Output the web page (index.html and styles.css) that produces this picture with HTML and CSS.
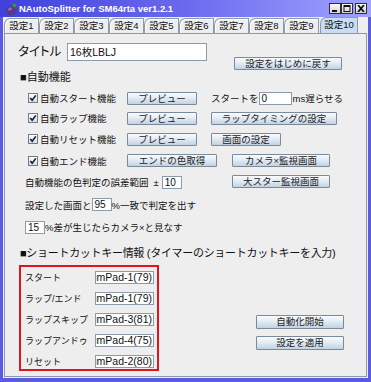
FILE: index.html
```html
<!DOCTYPE html>
<html lang="ja">

<head>
    <meta charset="UTF-8">
    <title>NAutoSplitter for SM64rta ver1.2.1</title>
    <link rel="stylesheet" href="styles.css">
</head>

<body>
    <div class="window">
        <div class="titlebar">
            <svg class="app-icon" width="14" height="14" viewBox="0 0 14 14">
                <ellipse cx="7.5" cy="8.5" rx="5.6" ry="4.6" transform="rotate(-20 7.5 8.5)" fill="#5b3a8c" />
                <ellipse cx="6" cy="7" rx="2.2" ry="1.4" transform="rotate(-20 6 7)" fill="#8a6bbd" />
                <path d="M8 2.5 L11 1.5 L12.5 4.5 L10 5.5 Z" fill="#3f9a2e" />
            </svg>
            <span class="title">NAutoSplitter for SM64rta ver1.2.1</span>
            <div class="win-buttons">
                <span class="win-btn"><svg width="8" height="7" viewBox="0 0 8 7"><rect x="1" y="5" width="5" height="2" fill="#111" /></svg></span>
                <span class="win-btn"><svg width="8" height="7" viewBox="0 0 8 7"><rect x="1" y="0.5" width="6" height="6" fill="none" stroke="#111" stroke-width="1" /><rect x="1" y="0" width="6" height="2" fill="#111" /></svg></span>
                <span class="win-btn close"><svg width="8" height="7" viewBox="0 0 8 7"><path d="M1 0 L7 7 M7 0 L1 7" stroke="#111" stroke-width="1.8" /></svg></span>
            </div>
        </div>

        <div class="frame">
            <div class="tabs">
                <div class="tab">設定1</div>
                <div class="tab">設定2</div>
                <div class="tab">設定3</div>
                <div class="tab">設定4</div>
                <div class="tab">設定5</div>
                <div class="tab">設定6</div>
                <div class="tab">設定7</div>
                <div class="tab">設定8</div>
                <div class="tab">設定9</div>
                <div class="tab active">設定10</div>
            </div>

            <div class="panel">
                <div class="title-row">
                    <span class="title-label">タイトル</span>
                    <span class="field title-field">16枚LBLJ</span>
                    <span class="btn btn-reset">設定をはじめに戻す</span>
                </div>

                <div class="section">■自動機能</div>

                <div class="row">
                    <span class="check-cell"><span class="checkbox"><svg width="8" height="8" viewBox="0 0 8 8"><path d="M1.3 4 L3.2 6.3 L6.8 1.4" fill="none" stroke="#1b1b1b" stroke-width="1.6" /></svg></span>自動スタート機能</span>
                    <span class="btn btn-preview">プレビュー</span>
                    <span class="col-right">スタートを</span>
                    <span class="field ms-field">0</span>
                    <span class="unit">ms遅らせる</span>
                </div>
                <div class="row">
                    <span class="check-cell"><span class="checkbox"><svg width="8" height="8" viewBox="0 0 8 8"><path d="M1.3 4 L3.2 6.3 L6.8 1.4" fill="none" stroke="#1b1b1b" stroke-width="1.6" /></svg></span>自動ラップ機能</span>
                    <span class="btn btn-preview">プレビュー</span>
                    <span class="btn col-right btn-lap">ラップタイミングの設定</span>
                </div>
                <div class="row row-22">
                    <span class="check-cell"><span class="checkbox"><svg width="8" height="8" viewBox="0 0 8 8"><path d="M1.3 4 L3.2 6.3 L6.8 1.4" fill="none" stroke="#1b1b1b" stroke-width="1.6" /></svg></span>自動リセット機能</span>
                    <span class="btn btn-preview">プレビュー</span>
                    <span class="btn col-right btn-screen">画面の設定</span>
                </div>
                <div class="row row-21">
                    <span class="check-cell"><span class="checkbox"><svg width="8" height="8" viewBox="0 0 8 8"><path d="M1.3 4 L3.2 6.3 L6.8 1.4" fill="none" stroke="#1b1b1b" stroke-width="1.6" /></svg></span>自動エンド機能</span>
                    <span class="btn btn-end">エンドの色取得</span>
                    <span class="btn btn-monitor">カメラ×監視画面</span>
                </div>
                <div class="row row-22 row-text">
                    <span class="tolerance">自動機能の色判定の誤差範囲<span class="plusminus">±</span><span class="field num-field">10</span></span>
                    <span class="btn btn-monitor-star">大スター監視画面</span>
                </div>
                <div class="row row-23 row-text">
                    設定した画面と<span class="field num-field">95</span>%一致で判定を出す
                </div>
                <div class="row row-22 row-text">
                    <span class="field num-field">15</span>%差が生じたらカメラ×と見なす
                </div>

                <div class="section section-keys">■ショートカットキー情報 (タイマーのショートカットキーを入力)</div>

                <div class="shortcut">
                    <div class="keybox">
                        <span>スタート</span>
                        <span class="field key-field"><span>NumPad-1(79)</span></span>
                        <span>ラップ/エンド</span>
                        <span class="field key-field"><span>NumPad-1(79)</span></span>
                        <span>ラップスキップ</span>
                        <span class="field key-field"><span>NumPad-3(81)</span></span>
                        <span>ラップアンドゥ</span>
                        <span class="field key-field"><span>NumPad-4(75)</span></span>
                        <span>リセット</span>
                        <span class="field key-field"><span>NumPad-2(80)</span></span>
                    </div>
                    <div class="actions">
                        <span class="btn btn-action">自動化開始</span>
                        <span class="btn btn-action">設定を適用</span>
                    </div>
                </div>
            </div>
        </div>
    </div>
</body>

</html>
```

FILE: styles.css
```css
html,
body {
    margin: 0;
    padding: 0;
}

body {
    background: #eeeeee;
    font-family: "Liberation Sans", "Noto Sans CJK JP", sans-serif;
    color: #111111;
}

.window {
    width: 371px;
    height: 382px;
    display: flex;
    flex-direction: column;
}

/* title bar */

.titlebar {
    height: 17px;
    display: flex;
    align-items: center;
    padding: 0 4px;
    background: linear-gradient(to right, #4040dc, #6a6aee 50%, #a2a2ff);
}

.app-icon {
    margin-right: 1px;
    flex-shrink: 0;
}

.title {
    color: #ffffff;
    font-weight: bold;
    font-size: 9.5px;
    white-space: nowrap;
}

.win-buttons {
    margin-left: auto;
    display: flex;
}

.win-btn {
    width: 12px;
    height: 11px;
    box-sizing: border-box;
    border: 1px solid #303030;
    background: linear-gradient(#fbfbfb, #d2d2d2);
    display: flex;
    align-items: center;
    justify-content: center;
}

.win-btn.close {
    margin-left: 2px;
}

/* frame and tabs */

.frame {
    flex: 1;
    display: flex;
    flex-direction: column;
    border-left: 3px solid #5a5ae2;
    border-right: 3px solid #5a5ae2;
    border-bottom: 4px solid #5a5ae2;
}

.tabs {
    height: 16px;
    display: flex;
    align-items: flex-end;
    padding-left: 1px;
}

.tab {
    width: 35px;
    height: 15px;
    box-sizing: border-box;
    border: 1px solid #8a9bb0;
    border-bottom: 0;
    border-top-left-radius: 6px 7px;
    background: #eeeeee;
    font-size: 9.5px;
    line-height: 14px;
    text-align: center;
    box-shadow: inset 1px 1px 0 #ffffff;
}

.tab.active {
    width: 38px;
    height: 16px;
    margin-left: 1px;
    background: #c8ddf2;
    box-shadow: none;
}

.panel {
    flex: 1;
    margin: 0 1px 1px;
    border: 1px solid #8a9bb0;
}

/* generic controls */

.field {
    box-sizing: border-box;
    border: 1px solid #8c9aab;
    background: #ffffff;
    white-space: nowrap;
}

.btn {
    box-sizing: border-box;
    height: 13px;
    border: 1px solid #7a8a99;
    border-radius: 1px;
    background: linear-gradient(#f8fbfd, #e3ecf5 45%, #c2d2e2);
    font-size: 9.5px;
    line-height: 11px;
    text-align: center;
    color: #222222;
    white-space: nowrap;
}

.checkbox {
    width: 10px;
    height: 10px;
    box-sizing: border-box;
    margin-right: 2px;
    border: 1px solid #6d7e90;
    background: linear-gradient(#ffffff, #cfdcea);
    display: flex;
    align-items: center;
    justify-content: center;
}

/* title row */

.title-row {
    height: 27px;
    margin-top: 9px;
    padding-left: 13px;
    display: flex;
    align-items: flex-start;
}

.title-label {
    width: 49px;
    font-size: 12.5px;
    line-height: 18px;
    font-feature-settings: "palt";
}

.title-field {
    width: 140px;
    height: 18px;
    padding-left: 2px;
    font-size: 10.5px;
    line-height: 16px;
}

.btn-reset {
    width: 108px;
    margin: 14px 0 0 27px;
}

.section {
    height: 15px;
    padding-left: 15px;
    font-size: 11px;
    line-height: 15px;
    white-space: nowrap;
}

/* auto function rows */

.row {
    height: 20px;
    padding-left: 23px;
    display: flex;
    align-items: center;
    font-size: 9.5px;
    white-space: nowrap;
}

.section+.row {
    margin-top: 3px;
}

.row-21 {
    height: 21px;
}

.row-22 {
    height: 22px;
}

.row-23 {
    height: 23px;
}

.row-text {
    padding-left: 20px;
}

.check-cell {
    width: 99px;
    display: flex;
    align-items: center;
}

.btn-preview {
    width: 70px;
}

.col-right {
    margin-left: 14px;
}

.ms-field {
    width: 33px;
    height: 13px;
    padding-left: 2px;
    font-size: 10px;
    line-height: 11px;
}

.unit {
    margin-left: 1px;
}

.btn-lap {
    width: 126px;
}

.btn-screen {
    width: 70px;
}

.btn-end {
    width: 90px;
}

.btn-monitor {
    width: 98px;
    margin-left: 15px;
}

.tolerance {
    width: 207px;
    display: flex;
    align-items: center;
}

.plusminus {
    margin: 0 3px 0 5px;
}

.btn-monitor-star {
    width: 98px;
    margin-top: -2px;
}

.num-field {
    width: 20px;
    height: 13px;
    padding-left: 2px;
    font-size: 10px;
    line-height: 11px;
}

.section-keys {
    margin-top: 7px;
    height: 16px;
    line-height: 16px;
    letter-spacing: -0.3px;
}

/* shortcut keys */

.shortcut {
    margin-top: 4px;
    padding-left: 14px;
    display: flex;
    align-items: flex-start;
}

.keybox {
    width: 140px;
    height: 106px;
    box-sizing: border-box;
    border: 2px solid #e3141c;
    padding-left: 4px;
    display: grid;
    grid-template-columns: 70px 59px;
    grid-auto-rows: 21px;
    align-items: center;
    font-size: 9px;
    white-space: nowrap;
}

.key-field {
    height: 13px;
    padding-right: 1px;
    display: flex;
    justify-content: flex-end;
    overflow: hidden;
    font-size: 10.5px;
    line-height: 11px;
}

.key-field span {
    flex-shrink: 0;
}

.actions {
    margin-left: 97px;
    padding-top: 50px;
    display: flex;
    flex-direction: column;
    gap: 7px;
}

.btn-action {
    width: 88px;
    height: 14px;
    line-height: 12px;
}
```
